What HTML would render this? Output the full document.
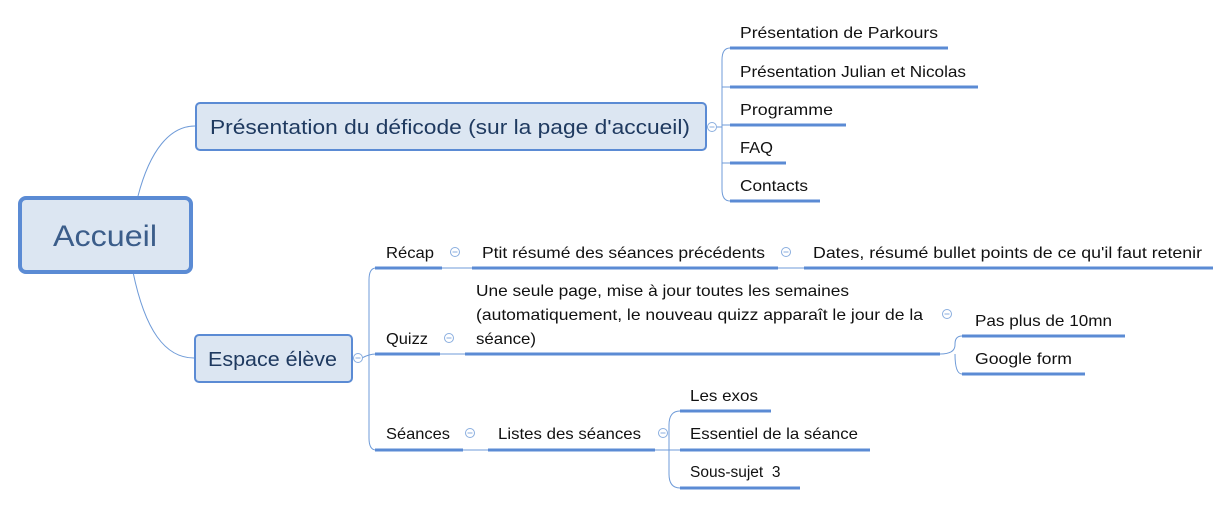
<!DOCTYPE html>
<html><head><meta charset="utf-8"><style>
html,body{margin:0;padding:0;background:#fff;width:1232px;height:505px;overflow:hidden}
svg text{font-family:"Liberation Sans",sans-serif;fill:#111}
</style></head><body>
<svg width="1232" height="505" viewBox="0 0 1232 505" xmlns="http://www.w3.org/2000/svg">
<g fill="none" stroke="#6f9bd8" stroke-width="1">
<path d="M138 196 C150 150 170 126 195 126"/>
<path d="M133 272 C145 330 165 358 194 358"/>
<path d="M706 127 L718 127"/>
<path d="M730 48 Q722 48 722 60 L722 189 Q722 201 730 201 M722 87 L730 87 M722 125 L730 125 M722 163 L730 163 M718 127 L722 127"/>
<path d="M352 358 L362 358"/>
<path d="M376 268 Q369 268 369 280 L369 438 Q369 450 376 450 M362 358 Q369 354 376 354"/>
<path d="M442 268 L472 268 M778 268 L804 268 M440 354 L465 354 M463 450 L488 450 M655 450 L680 450"/>
<path d="M940 354 Q955 354 955 345 L955 344 Q955 336 962 336 M955 354 Q955 374 962 374"/>
<path d="M680 411 Q669 411 669 425 L669 474 Q669 488 680 488"/>
</g>
<g stroke="#5b8bd4" stroke-width="3">
<path d="M730 48H948M730 87H978M730 125H846M730 163H786M730 201H820"/>
<path d="M375 268H442M472 268H778M804 268H1213"/>
<path d="M375 354H440M465 354H940M962 336H1125M962 374H1085"/>
<path d="M375 450H463M488 450H655M680 411H771M680 450H870M680 488H800"/>
</g>
<g fill="#fff" stroke="#8aaedf" stroke-width="1">
<circle cx="712" cy="127" r="4.5"/><circle cx="358" cy="358" r="4.5"/>
<circle cx="455" cy="252" r="4.5"/><circle cx="786" cy="252" r="4.5"/>
<circle cx="449" cy="338" r="4.5"/><circle cx="947" cy="314" r="4.5"/>
<circle cx="470" cy="433" r="4.5"/><circle cx="663" cy="433" r="4.5"/>
</g>
<g stroke="#8aaedf" stroke-width="1">
<path d="M709.5 127h5M355.5 358h5M452.5 252h5M783.5 252h5M446.5 338h5M944.5 314h5M467.5 433h5M660.5 433h5"/>
</g>
<rect x="20" y="198" width="171" height="74" rx="6" fill="#dce6f2" stroke="#5b8bd4" stroke-width="4"/>
<text x="53" y="246" font-size="30" textLength="104" lengthAdjust="spacingAndGlyphs" style="fill:#3b5d8a">Accueil</text>
<rect x="196" y="103" width="510" height="47" rx="4" fill="#dce6f2" stroke="#5b8bd4" stroke-width="2"/>
<text x="210" y="134" font-size="20" textLength="480" lengthAdjust="spacingAndGlyphs" style="fill:#1f3a60">Présentation du déficode (sur la page d'accueil)</text>
<rect x="195" y="335" width="157" height="47" rx="4" fill="#dce6f2" stroke="#5b8bd4" stroke-width="2"/>
<text x="208" y="366" font-size="20" textLength="129" lengthAdjust="spacingAndGlyphs" style="fill:#1f3a60">Espace élève</text>
<g font-size="16">
<text x="740" y="38" textLength="198" lengthAdjust="spacingAndGlyphs">Présentation de Parkours</text>
<text x="740" y="77" textLength="226" lengthAdjust="spacingAndGlyphs">Présentation Julian et Nicolas</text>
<text x="740" y="115" textLength="93" lengthAdjust="spacingAndGlyphs">Programme</text>
<text x="740" y="153" textLength="33" lengthAdjust="spacingAndGlyphs">FAQ</text>
<text x="740" y="191" textLength="68" lengthAdjust="spacingAndGlyphs">Contacts</text>
<text x="386" y="258" textLength="48" lengthAdjust="spacingAndGlyphs">Récap</text>
<text x="482" y="258" textLength="283" lengthAdjust="spacingAndGlyphs">Ptit résumé des séances précédents</text>
<text x="813" y="258" textLength="389" lengthAdjust="spacingAndGlyphs">Dates, résumé bullet points de ce qu'il faut retenir</text>
<text x="386" y="344" textLength="42" lengthAdjust="spacingAndGlyphs">Quizz</text>
<text x="476" y="296" textLength="373" lengthAdjust="spacingAndGlyphs">Une seule page, mise à jour toutes les semaines</text>
<text x="476" y="320" textLength="447" lengthAdjust="spacingAndGlyphs">(automatiquement, le nouveau quizz apparaît le jour de la</text>
<text x="476" y="344" textLength="60" lengthAdjust="spacingAndGlyphs">séance)</text>
<text x="975" y="326" textLength="137" lengthAdjust="spacingAndGlyphs">Pas plus de 10mn</text>
<text x="975" y="364" textLength="97" lengthAdjust="spacingAndGlyphs">Google form</text>
<text x="386" y="439" textLength="64" lengthAdjust="spacingAndGlyphs">Séances</text>
<text x="498" y="439" textLength="143" lengthAdjust="spacingAndGlyphs">Listes des séances</text>
<text x="690" y="401" textLength="68" lengthAdjust="spacingAndGlyphs">Les exos</text>
<text x="690" y="439" textLength="168" lengthAdjust="spacingAndGlyphs">Essentiel de la séance</text>
<text x="690" y="477" font-size="15.5">Sous-sujet&#160; 3</text>
</g>
</svg>
</body></html>
